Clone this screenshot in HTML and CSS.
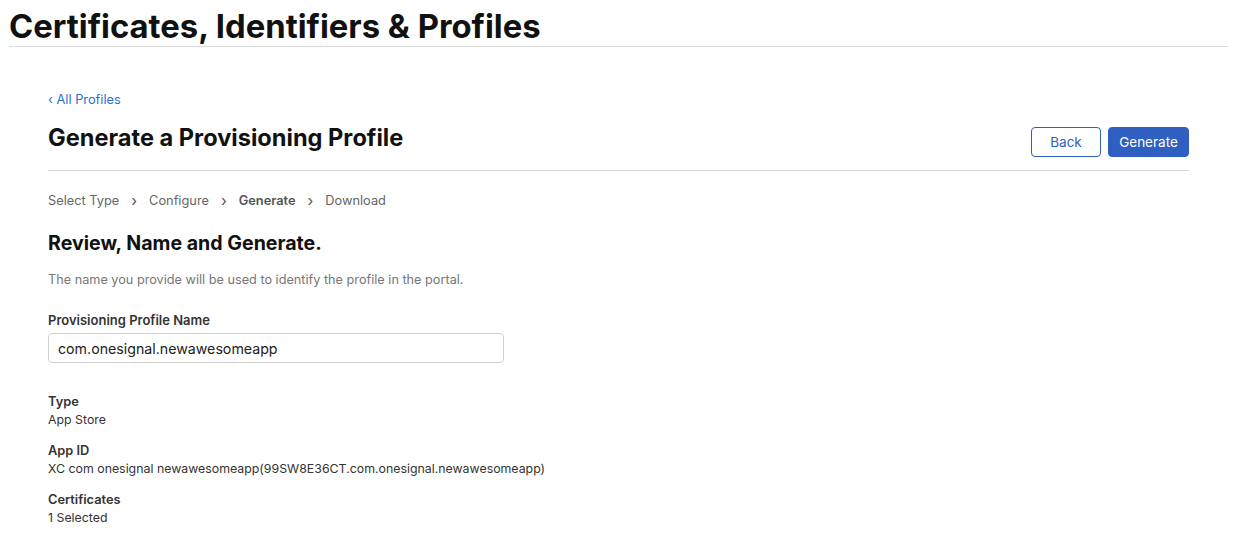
FILE: index.html
```html
<!DOCTYPE html>
<html>
<head>
<meta charset="utf-8">
<link rel="stylesheet" href="styles.css">
</head>
<body>
<header class="top">
  <h1 class="top-title">Certificates, Identifiers &amp; Profiles</h1>
</header>
<main class="content">
  <a class="back-link" href="#">‹ All Profiles</a>
  <div class="page-head">
    <h2 class="page-title">Generate a Provisioning Profile</h2>
    <div class="actions">
      <button class="btn btn-outline">Back</button>
      <button class="btn btn-primary">Generate</button>
    </div>
  </div>
  <nav class="steps">
    <span class="step">Select Type</span>
    <span class="sep">›</span>
    <span class="step">Configure</span>
    <span class="sep">›</span>
    <span class="step current">Generate</span>
    <span class="sep">›</span>
    <span class="step">Download</span>
  </nav>
  <h3 class="section-title">Review, Name and Generate.</h3>
  <p class="desc">The name you provide will be used to identify the profile in the portal.</p>
  <label class="field-label">Provisioning Profile Name</label>
  <input class="field-input" type="text" value="com.onesignal.newawesomeapp">
  <dl class="info">
    <div class="info-item"><dt>Type</dt><dd>App Store</dd></div>
    <div class="info-item"><dt>App ID</dt><dd>XC com onesignal newawesomeapp(99SW8E36CT.com.onesignal.newawesomeapp)</dd></div>
    <div class="info-item"><dt>Certificates</dt><dd>1 Selected</dd></div>
  </dl>
</main>
</body>
</html>
```

FILE: styles.css
```css
* { box-sizing: border-box; }
html, body { margin: 0; padding: 0; background: #fff; }
body {
  font-family: Inter, "Liberation Sans", sans-serif;
  color: #1d1d1f;
  padding: 0 6px 0 9px;
}
.top {
  border-bottom: 1px solid #dcdcdc;
  height: 47px;
  display: flex;
  align-items: flex-start;
}
.top-title {
  margin: 6px 0 0 0;
  font-size: 32.8px;
  font-weight: 700;
  letter-spacing: 0;
  line-height: 40px;
  color: #111;
}
.content {
  margin: 0 39px 0 39px;
  padding-top: 45px;
  width: 1141px;
}
.back-link {
  display: block;
  font-size: 12.8px;
  color: #2d6fd0;
  text-decoration: none;
  line-height: 16px;
}
.page-head {
  display: flex;
  align-items: flex-start;
  justify-content: space-between;
  border-bottom: 1px solid #d6d6d6;
  margin-top: 0;
  height: 63px;
}
.page-title {
  margin: 15px 0 0 0;
  font-size: 23.6px;
  font-weight: 700;
  line-height: 30px;
  color: #111;
}
.actions {
  display: flex;
  gap: 7px;
  margin-top: 19px;
}
.btn {
  font-family: Inter, "Liberation Sans", sans-serif;
  font-size: 13.5px;
  height: 30px;
  border-radius: 4px;
  padding: 0;
  cursor: pointer;
}
.btn-outline {
  width: 70px;
  background: #fff;
  border: 1px solid #2f5fc1;
  color: #2f5fc1;
}
.btn-primary {
  width: 81px;
  background: #305fc2;
  border: 1px solid #305fc2;
  color: #fff;
}
.steps {
  display: flex;
  gap: 12px;
  align-items: center;
  margin-top: 21px;
  font-size: 12.8px;
  color: #666;
  line-height: 18px;
}
.sep { color: #555; font-size: 15px; }
.step.current { font-weight: 600; color: #555; }
.section-title {
  margin: 20px 0 0 0;
  font-size: 19.6px;
  font-weight: 700;
  line-height: 26px;
  color: #111;
}
.desc {
  margin: 16px 0 0 0;
  font-size: 12.7px;
  color: #777;
  line-height: 16px;
}
.field-label {
  display: block;
  margin-top: 24px;
  font-size: 13px;
  font-weight: 600;
  color: #333;
  line-height: 16px;
}
.field-input {
  display: block;
  margin-top: 5px;
  width: 456px;
  height: 30px;
  border: 1px solid #cfcfcf;
  border-radius: 4px;
  padding: 0 9px;
  font-family: Inter, "Liberation Sans", sans-serif;
  font-size: 14.2px;
  color: #222;
}
.info { margin: 30px 0 0 0; display: flex; flex-direction: column; gap: 14px; }
.info-item dt {
  font-size: 12.8px;
  font-weight: 600;
  color: #333;
  line-height: 17px;
}
.info-item dd {
  margin: 1px 0 0 0;
  font-size: 12.35px;
  color: #333;
  line-height: 17px;
}
```
